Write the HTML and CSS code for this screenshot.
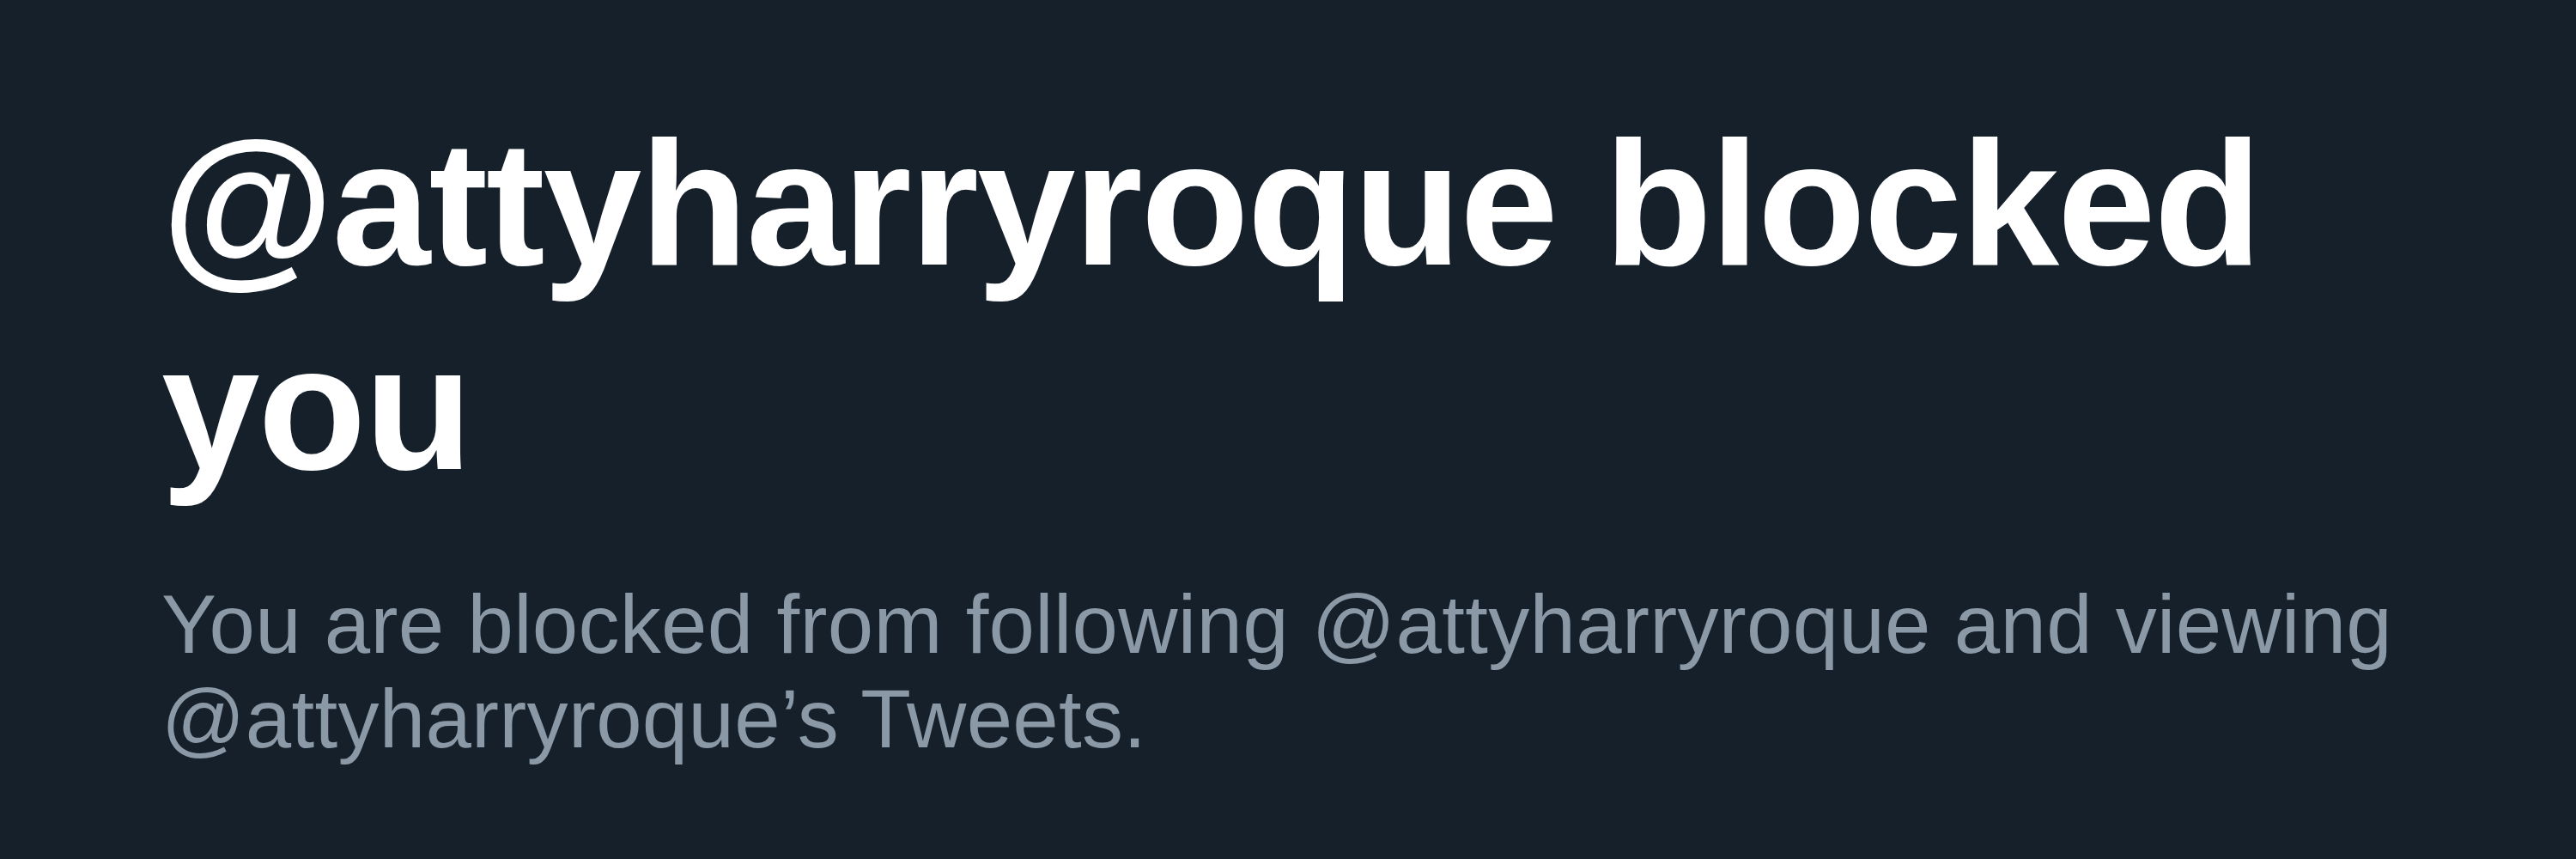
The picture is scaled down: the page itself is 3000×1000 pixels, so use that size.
FILE: index.html
```html
<!DOCTYPE html>
<html lang="en">
  <head>
    <meta charset="UTF-8" />
    <meta name="viewport" content="width=device-width, initial-scale=1.0" />
    <title>Blocked</title>
    <link rel="stylesheet" href="styles.css">
  </head>
  <body>
    <div class="blocked-container">
      <h2 class="blocked-title">@attyharryroque blocked you</h2>
      <p class="blocked-text">You are blocked from following @attyharryroque and viewing @attyharryroque’s Tweets.</p>
    </div>
  </body>
</html>
```

FILE: styles.css
```css
/* Reset some basic styles */
* {
  margin: 0;
  padding: 0;
  box-sizing: border-box;
}

body {
  font-family: "Liberation Sans", Arial, sans-serif;
  background-color: #15202b;
  color: #f7f9f9;
  height: 100vh;
}

/* Message block */
.blocked-container {
  padding: 118px 0 0 188px;
  width: 2850px;
}

.blocked-title {
  font-size: 206px;
  line-height: 238px;
  font-weight: bold;
  letter-spacing: -2px;
  color: #ffffff;
}

.blocked-text {
  margin-top: 78px;
  font-size: 96px;
  line-height: 110px;
  letter-spacing: 0.3px;
  color: #8b98a5;
}
```
